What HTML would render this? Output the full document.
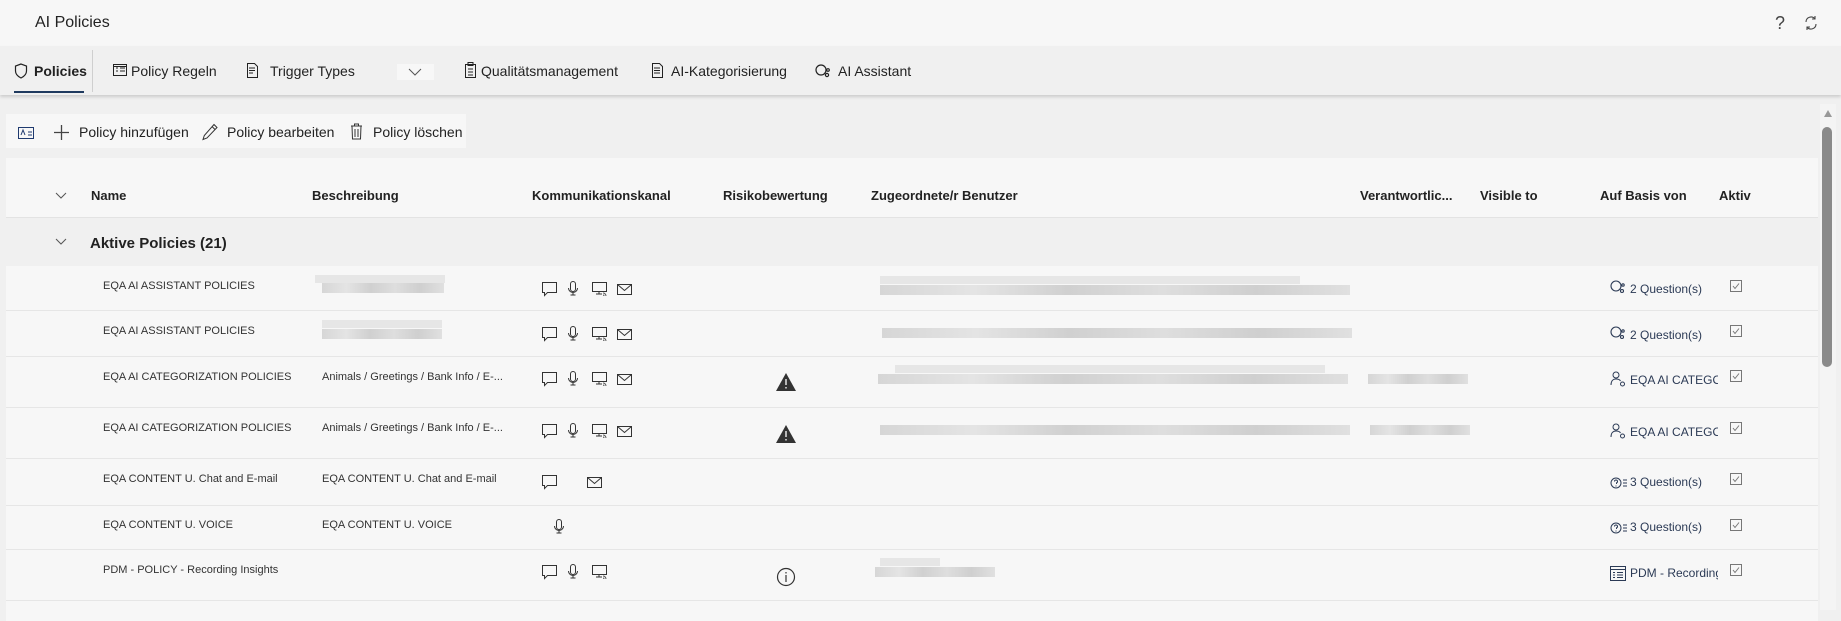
<!DOCTYPE html>
<html><head><meta charset="utf-8"><style>
*{margin:0;padding:0;box-sizing:border-box}
body{width:1841px;height:610px;overflow:hidden;background:#f0f0f0;font-family:"Liberation Sans",sans-serif;color:#222;position:relative}
.abs{position:absolute;white-space:nowrap}
.top{left:0;top:0;width:1841px;height:46px;background:#f7f7f7}
.tabs{left:0;top:46px;width:1841px;height:49px;background:#f0f0f0;box-shadow:0 2px 3px rgba(0,0,0,.15)}
.t{font-size:14px;top:63px;color:#222}
.tb{font-size:14px;top:124px;color:#222}
.table{left:6px;top:158px;width:1812px;height:452px;background:#f7f7f7}
.h{font-size:13px;font-weight:bold;top:188px}
.row{position:absolute;left:6px;width:1812px;border-bottom:1px solid #e6e6e6;background:#f7f7f7}
.c{font-size:11px;color:#333}
.blur{position:absolute;background:linear-gradient(90deg,#d6d6d6,#e4e4e4 20%,#d0d0d0 40%,#dedede 60%,#cfcfcf 80%,#e0e0e0);height:10px}
.blur2{position:absolute;background:#e6e6e6;height:8px}
.ab{font-size:12px;color:#2b3a55}
svg{position:absolute}
</style></head><body>
<div class="abs top"></div>
<div class="abs" style="left:35px;top:14px;font-size:16px;color:#222">AI Policies</div>
<div class="abs" style="left:1775px;top:13px;font-size:18px;color:#444">?</div>
<svg style="left:1803px;top:15px" width="16" height="16" viewBox="0 0 16 16" fill="none" stroke="#444" stroke-width="1.1"><path d="M3 7a5 5 0 0 1 9-3M13 9a5 5 0 0 1-9 3M12 1v3h-3M4 15v-3h3"/></svg>

<div class="abs tabs"></div>
<svg style="left:14px;top:63px" width="14" height="16" viewBox="0 0 14 16" fill="none" stroke="#222" stroke-width="1.2"><path d="M7 1L1.5 3v5c0 3 2.5 5.5 5.5 7 3-1.5 5.5-4 5.5-7V3z"/></svg>
<div class="abs t" style="left:34px;font-weight:bold">Policies</div>
<div class="abs" style="left:14px;top:91px;width:70px;height:2px;background:#1f3a5f"></div>
<div class="abs" style="left:92px;top:50px;width:1px;height:42px;background:#cfcfcf"></div>
<svg style="left:113px;top:64px" width="14" height="12" viewBox="0 0 14 12" fill="none" stroke="#222"><rect x=".5" y=".5" width="13" height="11"/><path d="M3 4h2M3 7h2M7 4h5M7 7h5M.5 2.5h13"/></svg>
<div class="abs t" style="left:131px">Policy Regeln</div>
<svg style="left:246px;top:63px" width="13" height="15" viewBox="0 0 13 15" fill="none" stroke="#222"><path d="M1.5 .5h7l3 3v11h-10z M3 5h6M3 7.5h6M3 10h4"/></svg>
<div class="abs t" style="left:270px">Trigger Types</div>
<div class="abs" style="left:397px;top:64px;width:37px;height:16px;background:#f7f7f7"></div>
<svg style="left:408px;top:68px" width="14" height="8" viewBox="0 0 14 8" fill="none" stroke="#555"><path d="M1 1l6 6 6-6"/></svg>
<svg style="left:465px;top:62px" width="11" height="16" viewBox="0 0 11 16" fill="none" stroke="#222"><rect x=".5" y="2.5" width="10" height="13"/><rect x="3" y=".5" width="5" height="3"/><path d="M3 7h5M3 10h5M3 13h5"/></svg>
<div class="abs t" style="left:481px">Qualitätsmanagement</div>
<svg style="left:651px;top:63px" width="13" height="15" viewBox="0 0 13 15" fill="none" stroke="#222"><path d="M1.5 .5h7l3 3v11h-10z M3 5h6M3 7.5h6M3 10h6"/></svg>
<div class="abs t" style="left:671px">AI-Kategorisierung</div>
<svg style="left:815px;top:63px" width="18" height="18" viewBox="0 0 18 18" fill="none" stroke="#222" stroke-width="1.2"><circle cx="6" cy="7" r="5"/><circle cx="13" cy="7" r="1.3"/><circle cx="12" cy="12" r="1.6"/></svg>
<div class="abs t" style="left:838px">AI Assistant</div>

<div class="abs" style="left:6px;top:114px;width:460px;height:34px;background:#f7f7f7"></div>
<svg style="left:18px;top:127px" width="16" height="12" viewBox="0 0 16 12" fill="none" stroke="#1f3a6f"><rect x=".5" y=".5" width="15" height="11"/><path d="M3 8l2-5 2 5M10 5h4M10 8h4"/></svg>
<svg style="left:53px;top:124px" width="17" height="17" viewBox="0 0 17 17" stroke="#444" stroke-width="1.3"><path d="M8.5 1v15M1 8.5h15"/></svg>
<div class="abs tb" style="left:79px">Policy hinzufügen</div>
<svg style="left:202px;top:123px" width="17" height="18" viewBox="0 0 17 18" fill="none" stroke="#333"><path d="M12 1.5l3 3L5 15l-4 1.5 1.3-4z M10 3.5l3 3"/></svg>
<div class="abs tb" style="left:227px">Policy bearbeiten</div>
<svg style="left:350px;top:123px" width="13" height="17" viewBox="0 0 13 17" fill="none" stroke="#333"><path d="M1 3h11M4.5 3V1h4v2M2 3l.5 13h8l.5-13M5 6v8M8 6v8"/></svg>
<div class="abs tb" style="left:373px">Policy löschen</div>

<div class="abs table"></div>
<svg style="left:55px;top:192px" width="12" height="7" viewBox="0 0 12 7" fill="none" stroke="#555"><path d="M1 1l5 5 5-5"/></svg>
<div class="abs h" style="left:91px">Name</div>
<div class="abs h" style="left:312px">Beschreibung</div>
<div class="abs h" style="left:532px">Kommunikationskanal</div>
<div class="abs h" style="left:723px">Risikobewertung</div>
<div class="abs h" style="left:871px">Zugeordnete/r Benutzer</div>
<div class="abs h" style="left:1360px">Verantwortlic...</div>
<div class="abs h" style="left:1480px">Visible to</div>
<div class="abs h" style="left:1600px">Auf Basis von</div>
<div class="abs h" style="left:1719px">Aktiv</div>
<div class="abs" style="left:6px;top:217px;width:1812px;height:49px;background:#f0f0f0;border-top:1px solid #e3e3e3"></div>
<svg style="left:55px;top:238px" width="12" height="7" viewBox="0 0 12 7" fill="none" stroke="#555"><path d="M1 1l5 5 5-5"/></svg>
<div class="abs" style="left:90px;top:235px;font-size:15px;font-weight:bold">Aktive Policies (21)</div>

<div class="row" style="top:266px;height:45px"></div>
<div class="row" style="top:311px;height:46px"></div>
<div class="row" style="top:357px;height:51px"></div>
<div class="row" style="top:408px;height:51px"></div>
<div class="row" style="top:459px;height:47px"></div>
<div class="row" style="top:506px;height:44px"></div>
<div class="row" style="top:550px;height:51px"></div>
<div class="row" style="top:601px;height:20px;border:none"></div>

<div class="abs c" style="left:103px;top:280px">EQA AI ASSISTANT POLICIES</div>
<div class="abs c" style="left:103px;top:325px">EQA AI ASSISTANT POLICIES</div>
<div class="abs c" style="left:103px;top:371px">EQA AI CATEGORIZATION POLICIES</div>
<div class="abs c" style="left:103px;top:422px">EQA AI CATEGORIZATION POLICIES</div>
<div class="abs c" style="left:103px;top:473px">EQA CONTENT U. Chat and E-mail</div>
<div class="abs c" style="left:103px;top:519px">EQA CONTENT U. VOICE</div>
<div class="abs c" style="left:103px;top:564px">PDM - POLICY - Recording Insights</div>

<div class="abs c" style="left:322px;top:371px">Animals / Greetings / Bank Info / E-...</div>
<div class="abs c" style="left:322px;top:422px">Animals / Greetings / Bank Info / E-...</div>
<div class="abs c" style="left:322px;top:473px">EQA CONTENT U. Chat and E-mail</div>
<div class="abs c" style="left:322px;top:519px">EQA CONTENT U. VOICE</div>

<div class="blur2" style="left:315px;top:275px;width:130px"></div><div class="blur" style="left:322px;top:283px;width:122px"></div>
<div class="blur2" style="left:322px;top:320px;width:120px"></div><div class="blur" style="left:322px;top:329px;width:120px"></div>

<div class="blur2" style="left:880px;top:276px;width:420px"></div><div class="blur" style="left:880px;top:285px;width:470px"></div>
<div class="blur" style="left:882px;top:328px;width:470px"></div>
<div class="blur2" style="left:895px;top:365px;width:430px"></div><div class="blur" style="left:878px;top:374px;width:470px"></div><div class="blur" style="left:1368px;top:374px;width:100px"></div>
<div class="blur" style="left:880px;top:425px;width:470px"></div><div class="blur" style="left:1370px;top:425px;width:100px"></div>
<div class="blur2" style="left:880px;top:558px;width:60px"></div><div class="blur" style="left:875px;top:567px;width:120px"></div>

<svg width="0" height="0"><defs>
<g id="chat"><path d="M.5 .5h14v10h-9l-3 3v-3h-2z" fill="none" stroke="#333"/></g>
<g id="mic"><rect x="2.5" y=".5" width="5" height="10" rx="2.5" fill="none" stroke="#333"/><path d="M.5 7a4.5 4.5 0 0 0 9 0M5 11.5v2.5M2.5 14h5" fill="none" stroke="#333"/></g>
<g id="scr"><path d="M.5 .5h14v9h-14z M4 12h6M7 9.5v2.5" fill="none" stroke="#333"/><path d="M11 11a3 3 0 0 1 3 3M11 13a1 1 0 0 1 1 1" stroke="#555" fill="none"/></g>
<g id="mail"><rect x=".5" y=".5" width="14" height="10" fill="none" stroke="#333"/><path d="M.5 .5l7 6 7-6" fill="none" stroke="#333"/></g>
<g id="cb"><rect x=".5" y=".5" width="11" height="11" fill="none" stroke="#777"/><path d="M3 6l2 2.5 4-5" fill="none" stroke="#777"/></g>
</defs></svg>
<svg style="left:542px;top:282px" width="16" height="15"><use href="#chat"/></svg><svg style="left:568px;top:281px" width="11" height="16"><use href="#mic"/></svg><svg style="left:592px;top:282px" width="16" height="15"><use href="#scr"/></svg><svg style="left:617px;top:284px" width="16" height="12"><use href="#mail"/></svg>
<svg style="left:542px;top:327px" width="16" height="15"><use href="#chat"/></svg><svg style="left:568px;top:326px" width="11" height="16"><use href="#mic"/></svg><svg style="left:592px;top:327px" width="16" height="15"><use href="#scr"/></svg><svg style="left:617px;top:329px" width="16" height="12"><use href="#mail"/></svg>
<svg style="left:542px;top:372px" width="16" height="15"><use href="#chat"/></svg><svg style="left:568px;top:371px" width="11" height="16"><use href="#mic"/></svg><svg style="left:592px;top:372px" width="16" height="15"><use href="#scr"/></svg><svg style="left:617px;top:374px" width="16" height="12"><use href="#mail"/></svg>
<svg style="left:542px;top:424px" width="16" height="15"><use href="#chat"/></svg><svg style="left:568px;top:423px" width="11" height="16"><use href="#mic"/></svg><svg style="left:592px;top:424px" width="16" height="15"><use href="#scr"/></svg><svg style="left:617px;top:426px" width="16" height="12"><use href="#mail"/></svg>
<svg style="left:542px;top:475px" width="16" height="15"><use href="#chat"/></svg><svg style="left:587px;top:477px" width="16" height="12"><use href="#mail"/></svg>
<svg style="left:554px;top:519px" width="11" height="16"><use href="#mic"/></svg>
<svg style="left:542px;top:565px" width="16" height="15"><use href="#chat"/></svg><svg style="left:568px;top:564px" width="11" height="16"><use href="#mic"/></svg><svg style="left:592px;top:565px" width="16" height="15"><use href="#scr"/></svg>

<svg style="left:776px;top:373px" width="20" height="18" viewBox="0 0 20 18"><path d="M10 0L20 18H0z" fill="#333"/><path d="M10 6v6M10 14v1.5" stroke="#fff" stroke-width="1.3"/></svg>
<svg style="left:776px;top:425px" width="20" height="18" viewBox="0 0 20 18"><path d="M10 0L20 18H0z" fill="#333"/><path d="M10 6v6M10 14v1.5" stroke="#fff" stroke-width="1.3"/></svg>
<svg style="left:776px;top:567px" width="20" height="20" viewBox="0 0 20 20" fill="none" stroke="#333" stroke-width="1.2"><circle cx="10" cy="10" r="8.5"/><path d="M10 8v7M10 5v1.5"/></svg>

<svg style="left:1610px;top:280px" width="16" height="17" viewBox="0 0 16 17" fill="none" stroke="#2b3a55" stroke-width="1.1"><circle cx="6" cy="6" r="5"/><circle cx="13" cy="5" r="1.2"/><circle cx="12" cy="11" r="1.5"/></svg>
<div class="abs ab" style="left:1630px;top:282px">2 Question(s)</div>
<svg style="left:1610px;top:326px" width="16" height="17" viewBox="0 0 16 17" fill="none" stroke="#2b3a55" stroke-width="1.1"><circle cx="6" cy="6" r="5"/><circle cx="13" cy="5" r="1.2"/><circle cx="12" cy="11" r="1.5"/></svg>
<div class="abs ab" style="left:1630px;top:328px">2 Question(s)</div>
<svg style="left:1610px;top:371px" width="16" height="16" viewBox="0 0 16 16" fill="none" stroke="#2b3a55"><circle cx="6" cy="4" r="3"/><path d="M1 14c0-4 2-6 5-6s4 1 4.5 2"/><circle cx="12.5" cy="13" r="2"/></svg>
<div class="abs ab" style="left:1630px;top:373px;width:88px;overflow:hidden">EQA AI CATEGORIZATION</div>
<svg style="left:1610px;top:423px" width="16" height="16" viewBox="0 0 16 16" fill="none" stroke="#2b3a55"><circle cx="6" cy="4" r="3"/><path d="M1 14c0-4 2-6 5-6s4 1 4.5 2"/><circle cx="12.5" cy="13" r="2"/></svg>
<div class="abs ab" style="left:1630px;top:425px;width:88px;overflow:hidden">EQA AI CATEGORIZATION</div>
<svg style="left:1610px;top:477px" width="18" height="12" viewBox="0 0 18 12" fill="none" stroke="#2b3a55"><circle cx="6" cy="6" r="5"/><path d="M4.5 4.5a1.5 1.5 0 1 1 2 1.4V7M6 8.5v1M13 3h4M13 6h4M13 9h4"/></svg>
<div class="abs ab" style="left:1630px;top:475px">3 Question(s)</div>
<svg style="left:1610px;top:522px" width="18" height="12" viewBox="0 0 18 12" fill="none" stroke="#2b3a55"><circle cx="6" cy="6" r="5"/><path d="M4.5 4.5a1.5 1.5 0 1 1 2 1.4V7M6 8.5v1M13 3h4M13 6h4M13 9h4"/></svg>
<div class="abs ab" style="left:1630px;top:520px">3 Question(s)</div>
<svg style="left:1610px;top:566px" width="16" height="15" viewBox="0 0 16 15" fill="none" stroke="#2b3a55"><rect x=".5" y=".5" width="15" height="14"/><path d="M.5 3.5h15M3 6.5h2M3 9h2M3 11.5h2M7 6.5h6M7 9h6M7 11.5h6"/></svg>
<div class="abs ab" style="left:1630px;top:566px;width:88px;overflow:hidden">PDM - Recording Insights</div>

<svg style="left:1730px;top:280px" width="12" height="12"><use href="#cb"/></svg>
<svg style="left:1730px;top:325px" width="12" height="12"><use href="#cb"/></svg>
<svg style="left:1730px;top:370px" width="12" height="12"><use href="#cb"/></svg>
<svg style="left:1730px;top:422px" width="12" height="12"><use href="#cb"/></svg>
<svg style="left:1730px;top:473px" width="12" height="12"><use href="#cb"/></svg>
<svg style="left:1730px;top:519px" width="12" height="12"><use href="#cb"/></svg>
<svg style="left:1730px;top:564px" width="12" height="12"><use href="#cb"/></svg>

<div class="abs" style="left:1820px;top:104px;width:16px;height:506px;background:#f4f4f4"></div>
<svg style="left:1824px;top:110px" width="8" height="7"><path d="M4 0L8 7H0z" fill="#999"/></svg>
<div class="abs" style="left:1822px;top:127px;width:10px;height:240px;background:#8a8a8a;border-radius:5px"></div>
</body></html>
